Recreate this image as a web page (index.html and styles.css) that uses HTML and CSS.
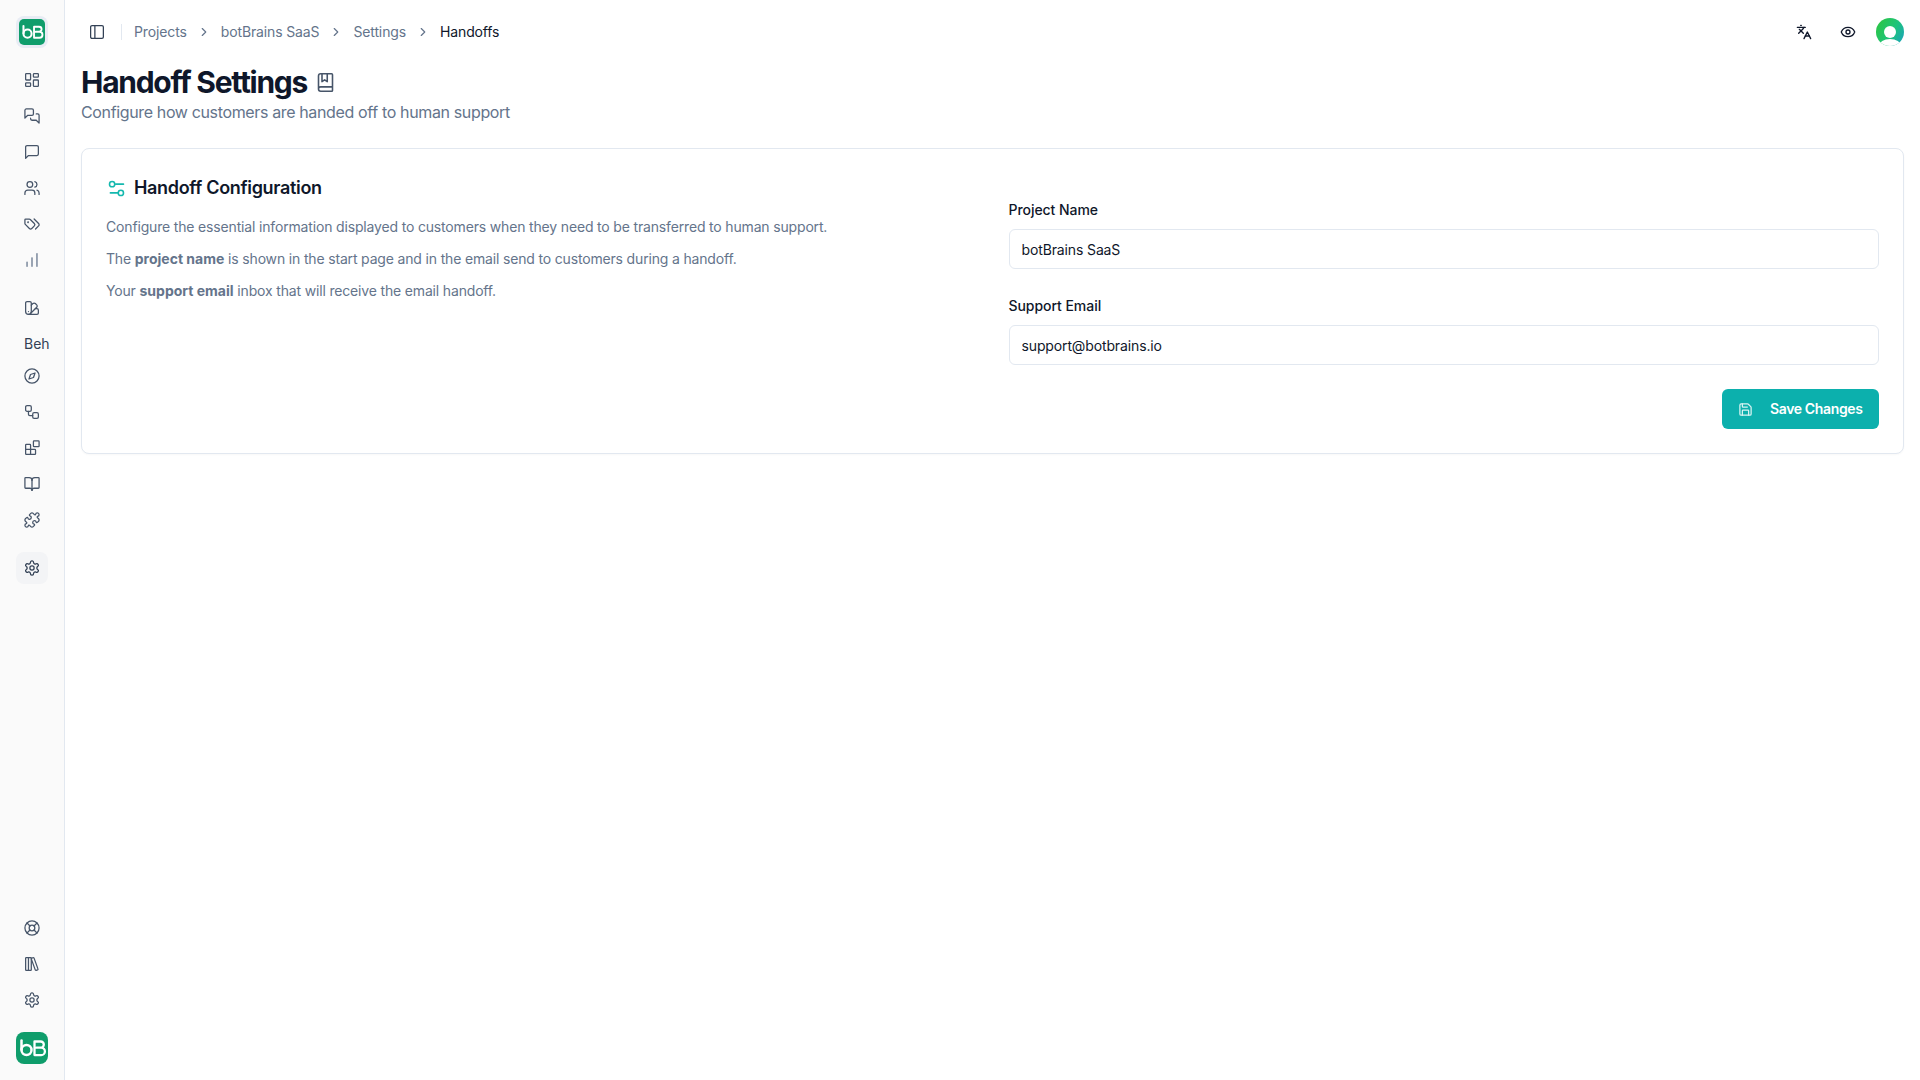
FILE: index.html
```html
<!DOCTYPE html>
<html lang="en">
<head>
<meta charset="utf-8">
<title>Handoff Settings</title>
<link rel="stylesheet" href="styles.css">
</head>
<body>
<svg class="defs" width="0" height="0" aria-hidden="true">
  <defs>
    <symbol id="bb" viewBox="0 0 32 32">
      <path d="M5.500 8.500v9" fill="none" stroke="#fff" stroke-width="2.500" stroke-linecap="round"/>
      <circle cx="10.500" cy="18" r="5" fill="none" stroke="#fff" stroke-width="2.500"/>
      <path d="M18.500 9.500h6.200a3.100 3.100 0 0 1 0 6.200h-4.200M20.500 15.700h4.700a3.700 3.700 0 0 1 0 7.400h-6.700M18.500 9.500v13.600" fill="none" stroke="#fff" stroke-width="2.300" stroke-linecap="round" stroke-linejoin="round"/>
    </symbol>
    <symbol id="gear" viewBox="0 0 24 24">
      <path d="M12.220 2h-.44a2 2 0 0 0-2 2v.18a2 2 0 0 1-1 1.730l-.43.25a2 2 0 0 1-2 0l-.15-.08a2 2 0 0 0-2.730.73l-.22.38a2 2 0 0 0 .73 2.730l.15.1a2 2 0 0 1 1 1.720v.51a2 2 0 0 1-1 1.740l-.15.09a2 2 0 0 0-.73 2.730l.22.38a2 2 0 0 0 2.730.73l.15-.08a2 2 0 0 1 2 0l.43.25a2 2 0 0 1 1 1.730V20a2 2 0 0 0 2 2h.44a2 2 0 0 0 2-2v-.18a2 2 0 0 1 1-1.730l.43-.25a2 2 0 0 1 2 0l.15.08a2 2 0 0 0 2.730-.73l.22-.39a2 2 0 0 0-.73-2.730l-.15-.08a2 2 0 0 1-1-1.740v-.5a2 2 0 0 1 1-1.740l.15-.09a2 2 0 0 0 .73-2.730l-.22-.38a2 2 0 0 0-2.730-.73l-.15.08a2 2 0 0 1-2 0l-.43-.25a2 2 0 0 1-1-1.730V4a2 2 0 0 0-2-2z"/>
      <circle cx="12" cy="12" r="3"/>
    </symbol>
  </defs>
</svg>

<div class="app">
  <aside class="sidebar">
    <div class="logo-ring"><span class="logo logo-sm"><svg class="fill-icon" viewBox="0 0 32 32"><use href="#bb"/></svg></span></div>

    <nav class="nav-group nav-main">
      <a class="nav-item"><svg class="ico" viewBox="0 0 24 24"><rect x="3" y="3" width="7" height="9" rx="1"/><rect x="14" y="3" width="7" height="5" rx="1"/><rect x="14" y="12" width="7" height="9" rx="1"/><rect x="3" y="16" width="7" height="5" rx="1"/></svg></a>
      <a class="nav-item"><svg class="ico" viewBox="0 0 24 24"><path d="M14 9a2 2 0 0 1-2 2H6l-4 4V4a2 2 0 0 1 2-2h8a2 2 0 0 1 2 2z"/><path d="M18 9h2a2 2 0 0 1 2 2v11l-4-4h-6a2 2 0 0 1-2-2v-1"/></svg></a>
      <a class="nav-item"><svg class="ico" viewBox="0 0 24 24"><path d="M21 15a2 2 0 0 1-2 2H7l-4 4V5a2 2 0 0 1 2-2h14a2 2 0 0 1 2 2z"/></svg></a>
      <a class="nav-item"><svg class="ico" viewBox="0 0 24 24"><path d="M16 21v-2a4 4 0 0 0-4-4H6a4 4 0 0 0-4 4v2"/><circle cx="9" cy="7" r="4"/><path d="M22 21v-2a4 4 0 0 0-3-3.870"/><path d="M16 3.130a4 4 0 0 1 0 7.750"/></svg></a>
      <a class="nav-item"><svg class="ico" viewBox="0 0 24 24"><path d="m15 5 6.300 6.300a2.400 2.400 0 0 1 0 3.400L17 19"/><path d="M9.586 5.586A2 2 0 0 0 8.172 5H3a1 1 0 0 0-1 1v5.172a2 2 0 0 0 .586 1.414L8.290 18.290a2.426 2.426 0 0 0 3.420 0l3.580-3.580a2.426 2.426 0 0 0 0-3.420z"/><circle cx="6.500" cy="9.500" r=".5"/></svg></a>
      <a class="nav-item"><svg class="ico ico-soft" viewBox="0 0 24 24"><path d="M5 21v-6"/><path d="M12 21V9"/><path d="M19 21V3"/></svg></a>
    </nav>

    <nav class="nav-group nav-second">
      <a class="nav-item"><svg class="ico" viewBox="0 0 24 24"><path d="M11 17a4 4 0 0 1-8 0V5a2 2 0 0 1 2-2h4a2 2 0 0 1 2 2Z"/><path d="M16.700 13H19a2 2 0 0 1 2 2v4a2 2 0 0 1-2 2H7"/><path d="M7 17h.01"/><path d="m11 8 2.300-2.300a2.400 2.400 0 0 1 3.404.004L18.600 7.600a2.400 2.400 0 0 1 .026 3.434L9.900 19.800"/></svg></a>
    </nav>

    <div class="nav-label">Beh</div>

    <nav class="nav-group">
      <a class="nav-item"><svg class="ico" viewBox="0 0 24 24"><circle cx="12" cy="12" r="10"/><path d="m16.240 7.760-2.120 6.360-6.360 2.120 2.120-6.360z"/></svg></a>
      <a class="nav-item"><svg class="ico" viewBox="0 0 24 24"><rect x="3" y="3" width="8" height="8" rx="2"/><path d="M7 11v4a2 2 0 0 0 2 2h4"/><rect x="13" y="13" width="8" height="8" rx="2"/></svg></a>
      <a class="nav-item"><svg class="ico" viewBox="0 0 24 24"><rect x="14" y="2" width="8" height="8" rx="1"/><path d="M10 21V8a1 1 0 0 0-1-1H4a1 1 0 0 0-1 1v12a1 1 0 0 0 1 1h12a1 1 0 0 0 1-1v-5a1 1 0 0 0-1-1H3"/></svg></a>
      <a class="nav-item"><svg class="ico" viewBox="0 0 24 24"><path d="M12 7v14"/><path d="M3 18a1 1 0 0 1-1-1V4a1 1 0 0 1 1-1h5a4 4 0 0 1 4 4 4 4 0 0 1 4-4h5a1 1 0 0 1 1 1v13a1 1 0 0 1-1 1h-6a3 3 0 0 0-3 3 3 3 0 0 0-3-3z"/></svg></a>
      <a class="nav-item"><svg class="ico" viewBox="0 0 24 24"><path d="M15.390 4.390a1 1 0 0 0 1.680-.474 2.500 2.500 0 1 1 3.014 3.015 1 1 0 0 0-.474 1.680l1.683 1.682a2.414 2.414 0 0 1 0 3.414L19.610 15.390a1 1 0 0 1-1.680-.474 2.500 2.500 0 1 0-3.014 3.015 1 1 0 0 1 .474 1.680l-1.683 1.682a2.414 2.414 0 0 1-3.414 0L8.610 19.610a1 1 0 0 0-1.680.474 2.500 2.500 0 1 1-3.014-3.015 1 1 0 0 0 .474-1.680l-1.683-1.682a2.414 2.414 0 0 1 0-3.414L4.390 8.610a1 1 0 0 1 1.680.474 2.500 2.500 0 1 0 3.014-3.015 1 1 0 0 1-.474-1.680l1.683-1.682a2.414 2.414 0 0 1 3.414 0z"/></svg></a>
    </nav>

    <a class="nav-tile"><svg class="ico ico-dark" viewBox="0 0 24 24"><use href="#gear"/></svg></a>

    <nav class="nav-group nav-bottom">
      <a class="nav-item"><svg class="ico" viewBox="0 0 24 24"><circle cx="12" cy="12" r="10"/><path d="m4.930 4.930 4.240 4.240"/><path d="m14.830 9.170 4.240-4.240"/><path d="m14.830 14.830 4.240 4.240"/><path d="m9.170 14.830-4.240 4.240"/><circle cx="12" cy="12" r="4"/></svg></a>
      <a class="nav-item"><svg class="ico" viewBox="0 0 24 24"><rect x="3" y="3" width="8" height="18" rx="1"/><path d="M7 3v18"/><path d="M20.400 18.900c.2.5-.1 1.100-.6 1.300l-1.900.7c-.5.2-1.100-.1-1.300-.6L11.100 5.100c-.2-.5.1-1.100.6-1.300l1.900-.7c.5-.2 1.100.1 1.300.6Z"/></svg></a>
      <a class="nav-item"><svg class="ico" viewBox="0 0 24 24"><use href="#gear"/></svg></a>
    </nav>

    <span class="logo logo-lg"><svg class="fill-icon" viewBox="0 0 32 32"><use href="#bb"/></svg></span>
  </aside>

  <div class="main">
    <header class="topbar">
      <svg class="ico ico-dark toggle" viewBox="0 0 24 24"><rect x="3" y="3" width="18" height="18" rx="2"/><path d="M9 3v18"/></svg>
      <span class="vsep"></span>
      <ol class="crumbs">
        <li>Projects</li>
        <li class="chev"><svg viewBox="0 0 24 24"><path d="m9 18 6-6-6-6"/></svg></li>
        <li>botBrains SaaS</li>
        <li class="chev"><svg viewBox="0 0 24 24"><path d="m9 18 6-6-6-6"/></svg></li>
        <li>Settings</li>
        <li class="chev"><svg viewBox="0 0 24 24"><path d="m9 18 6-6-6-6"/></svg></li>
        <li class="current">Handoffs</li>
      </ol>
      <div class="top-actions">
        <svg class="ico ico-black" viewBox="0 0 24 24"><path d="m5 8 6 6"/><path d="m4 14 6-6 2-3"/><path d="M2 5h12"/><path d="M7 2h1"/><path d="m22 22-5-10-5 10"/><path d="M14 18h6"/></svg>
        <svg class="ico ico-black" viewBox="0 0 24 24"><path d="M2.062 12.348a1 1 0 0 1 0-.696 10.750 10.750 0 0 1 19.876 0 1 1 0 0 1 0 .696 10.750 10.750 0 0 1-19.876 0"/><circle cx="12" cy="12" r="3"/></svg>
        <span class="avatar"><span class="avatar-head"></span><span class="avatar-body"></span></span>
      </div>
    </header>

    <main class="content">
      <div class="title-row">
        <h1>Handoff Settings</h1>
        <svg class="title-icon" viewBox="0 0 24 24"><path d="M4 19.500v-15A2.500 2.500 0 0 1 6.500 2H19a1 1 0 0 1 1 1v18a1 1 0 0 1-1 1H6.500a1 1 0 0 1 0-5H20"/><path d="M8 2v9l3-2 3 2V2"/></svg>
      </div>
      <p class="subtitle">Configure how customers are handed off to human support</p>

      <section class="card">
        <div class="card-info">
          <h2><svg class="head-icon" viewBox="0 0 24 24"><path d="M20 7h-9"/><path d="M14 17H5"/><circle cx="17" cy="17" r="3"/><circle cx="7" cy="7" r="3"/></svg>Handoff Configuration</h2>
          <p>Configure the essential information displayed to customers when they need to be transferred to human support.</p>
          <p>The <b>project name</b> is shown in the start page and in the email send to customers during a handoff.</p>
          <p>Your <b>support email</b> inbox that will receive the email handoff.</p>
        </div>
        <form class="card-form">
          <label class="field"><span>Project Name</span><input type="text" value="botBrains SaaS"></label>
          <label class="field"><span>Support Email</span><input type="text" value="support@botbrains.io"></label>
          <div class="form-actions">
            <button type="button" class="save">
              <svg viewBox="0 0 24 24"><path d="M15.200 3a2 2 0 0 1 1.400.600l3.800 3.800a2 2 0 0 1 .600 1.400V19a2 2 0 0 1-2 2H5a2 2 0 0 1-2-2V5a2 2 0 0 1 2-2z"/><path d="M17 21v-7a1 1 0 0 0-1-1H8a1 1 0 0 0-1 1v7"/><path d="M7 3v4a1 1 0 0 0 1 1h7"/></svg>
              Save Changes
            </button>
          </div>
        </form>
      </section>
    </main>
  </div>
</div>
</body>
</html>
```
FILE: styles.css
```css
* { box-sizing: border-box; }
html, body { margin: 0; height: 100%; }
body {
  font-family: Inter, "Liberation Sans", sans-serif;
  background: #fff;
  color: #0f172a;
}
.defs { position: absolute; }
.app { display: flex; height: 1080px; overflow: hidden; }

.sidebar {
  width: 65px;
  flex: none;
  background: #fafafa;
  border-right: 1px solid #e2e8f0;
  display: flex;
  flex-direction: column;
  align-items: center;
  padding-top: 16px;
  padding-bottom: 16px;
}
.logo-ring {
  width: 32px;
  height: 32px;
  padding: 3px;
  border-radius: 8px;
  background: #e8ecf4;
  display: flex;
}
.logo { display: flex; background: #0f9d6b; }
.logo-sm { width: 26px; height: 26px; border-radius: 5px; }
.logo-lg { width: 32px; height: 32px; border-radius: 8px; margin-top: 14px; }
.fill-icon { width: 100%; height: 100%; display: block; }

.nav-group { display: flex; flex-direction: column; width: 100%; align-items: center; }
.nav-main { margin-top: 14px; }
.nav-second { margin-top: 12px; }
.nav-item { width: 100%; height: 36px; display: flex; align-items: center; justify-content: center; }
.nav-label { font-size: 14px; line-height: 20px; color: #334155; align-self: flex-start; padding-left: 24px; margin-top: 8px; margin-bottom: 4px; }
.nav-tile {
  width: 32px;
  height: 32px;
  margin-top: 14px;
  border-radius: 8px;
  background: #f3f4f6;
  display: flex;
  align-items: center;
  justify-content: center;
}
.nav-bottom { margin-top: auto; }

.ico { width: 16px; height: 16px; fill: none; stroke: #475569; stroke-width: 2; stroke-linecap: round; stroke-linejoin: round; flex: none; }
.nav-item .ico, .nav-tile .ico { transform: scale(1.0625); stroke-width: 1.800; }
.ico-soft { stroke: #64748b; }
.ico-dark { stroke: #334155; }
.ico-black { stroke: #0f172a; }

.main { flex: 1; min-width: 0; display: flex; flex-direction: column; }
.topbar { height: 64px; flex: none; display: flex; align-items: center; padding: 0 16px 0 24px; }
.toggle { width: 16px; height: 16px; transform: scale(1.0625); stroke-width: 1.800; }
.vsep { width: 1px; height: 16px; background: #e2e8f0; margin: 0 12px 0 16px; }
.crumbs { list-style: none; margin: 0; padding: 0; display: flex; align-items: center; gap: 10px; font-size: 14px; line-height: 20px; color: #64748b; letter-spacing: -0.130px; }
.crumbs .current { color: #0f172a; }
.chev { display: flex; }
.chev svg { width: 14px; height: 14px; fill: none; stroke: #64748b; stroke-width: 2; stroke-linecap: round; stroke-linejoin: round; }
.top-actions { margin-left: auto; display: flex; align-items: center; gap: 28px; }
.avatar {
  width: 28px;
  height: 28px;
  border-radius: 50%;
  margin-left: -8px;
  position: relative;
  overflow: hidden;
  background: linear-gradient(120deg, #2fc53c 0%, #1ec47a 55%, #1a9fc4 100%);
  display: block;
}
.avatar-head { position: absolute; left: 8px; top: 8px; width: 12px; height: 12px; border-radius: 50%; background: #fff; }
.avatar-body { position: absolute; left: 3px; top: 21px; width: 22px; height: 14px; border-radius: 50%; background: #fff; }

.content { padding: 0 16px; }
.title-row { display: flex; align-items: center; gap: 8px; height: 36px; }
h1 { margin: 0; font-size: 30px; line-height: 36px; font-weight: 700; letter-spacing: -1.280px; color: #0f172a; }
.title-icon { width: 21px; height: 21px; fill: none; stroke: #475569; stroke-width: 1.800; stroke-linecap: round; stroke-linejoin: round; }
.subtitle { margin: 0; font-size: 16px; line-height: 24px; color: #64748b; letter-spacing: -0.360px; }

.card {
  margin-top: 24px;
  height: 306px;
  border: 1px solid #e2e8f0;
  border-radius: 8px;
  background: #fff;
  box-shadow: 0 1px 2px rgba(0, 0, 0, 0.03);
  padding: 25px 24px 24px;
  display: grid;
  grid-template-columns: 1fr 1fr;
  gap: 32px;
}
.card-info h2 { margin: 0 0 15px; display: flex; align-items: center; gap: 7px; font-size: 18px; line-height: 28px; font-weight: 600; color: #0f172a; letter-spacing: -0.320px; }
.head-icon { width: 21px; height: 21px; fill: none; stroke: #14b8ae; stroke-width: 1.800; stroke-linecap: round; stroke-linejoin: round; flex: none; }
.card-info p { margin: 0 0 12px; font-size: 14px; line-height: 20px; color: #64748b; letter-spacing: -0.165px; }
.card-info b { font-weight: 700; letter-spacing: 0; }

.card-form { display: flex; flex-direction: column; padding-top: 28px; }
.field { display: flex; flex-direction: column; gap: 11px; font-size: 14px; font-weight: 500; color: #0f172a; letter-spacing: -0.050px; }
.field + .field { margin-top: 29px; }
.field span { line-height: 16px; }
.field input {
  height: 40px;
  border: 1px solid #e2e8f0;
  border-radius: 6px;
  padding: 0 12px;
  font: 400 14px/20px Inter, "Liberation Sans", sans-serif;
  letter-spacing: -0.130px;
  color: #0f172a;
  background: #fff;
  width: 100%;
}
.form-actions { display: flex; justify-content: flex-end; margin-top: 24px; }
.save {
  height: 40px;
  width: 157px;
  background: #0cb0ad;
  border: 0;
  border-radius: 6px;
  color: #fff;
  font: 600 14px/20px Inter, "Liberation Sans", sans-serif;
  letter-spacing: -0.360px;
  display: flex;
  align-items: center;
  gap: 17px;
  padding: 0 16px;
  white-space: nowrap;
}
.save svg { width: 15px; height: 15px; fill: none; stroke: #d8f3f2; stroke-width: 2; stroke-linecap: round; stroke-linejoin: round; flex: none; }
```
